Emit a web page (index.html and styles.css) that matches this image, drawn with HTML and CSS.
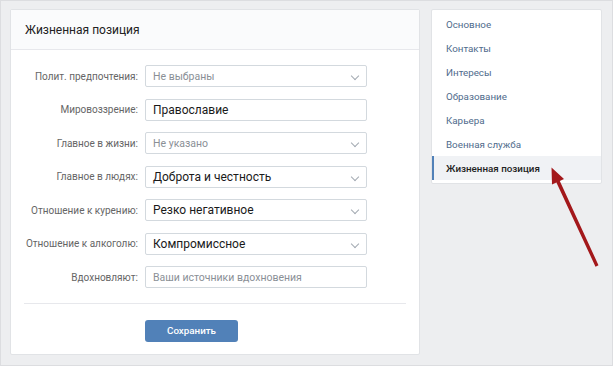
FILE: index.html
```html
<!DOCTYPE html>
<html lang="ru">
<head>
<meta charset="utf-8">
<link rel="stylesheet" href="styles.css">
</head>
<body>
<div class="page">
  <div class="card main">
    <div class="card-head">Жизненная позиция</div>
    <div class="form">
      <div class="row"><div class="label">Полит. предпочтения:</div><div class="field select placeholder">Не выбраны<span class="chev"></span></div></div>
      <div class="row"><div class="label">Мировоззрение:</div><div class="field">Православие</div></div>
      <div class="row"><div class="label">Главное в жизни:</div><div class="field select placeholder">Не указано<span class="chev"></span></div></div>
      <div class="row"><div class="label">Главное в людях:</div><div class="field select">Доброта и честность<span class="chev"></span></div></div>
      <div class="row"><div class="label">Отношение к курению:</div><div class="field select">Резко негативное<span class="chev"></span></div></div>
      <div class="row"><div class="label">Отношение к алкоголю:</div><div class="field select">Компромиссное<span class="chev"></span></div></div>
      <div class="row"><div class="label">Вдохновляют:</div><div class="field placeholder">Ваши источники вдохновения</div></div>
    </div>
    <div class="divider"></div>
    <div class="actions"><button class="btn">Сохранить</button></div>
  </div>
  <div class="card side">
    <div class="menu-item">Основное</div>
    <div class="menu-item">Контакты</div>
    <div class="menu-item">Интересы</div>
    <div class="menu-item">Образование</div>
    <div class="menu-item">Карьера</div>
    <div class="menu-item">Военная служба</div>
    <div class="menu-item active">Жизненная позиция</div>
  </div>
  <svg class="arrow" width="613" height="366" viewBox="0 0 613 366">
    <polygon points="551.5,167.5 564,179 559.8,180.9 598.5,265.3 595.5,266.7 556.4,182.4 552,184.5" fill="#a3181b"/>
  </svg>
</div>
</body>
</html>
```
FILE: styles.css
```css
* { box-sizing: border-box; }
html, body { margin: 0; padding: 0; }
body {
  background: #edeef0;
  font-family: Roboto, "Open Sans", "Liberation Sans", sans-serif;
  width: 613px;
  height: 366px;
  overflow: hidden;
}
.page {
  position: relative;
  width: 613px;
  height: 366px;
  border: 1px solid #dcdde0;
  padding: 8px 9px;
  display: flex;
  gap: 11px;
  align-items: flex-start;
}
.card {
  background: #fff;
  border: 1px solid #e1e3e6;
  border-radius: 2px;
}
.main {
  width: 410px;
  height: 346px;
}
.card-head {
  height: 40px;
  background: #fafbfc;
  border-bottom: 1px solid #e7e8ec;
  padding-left: 14px;
  display: flex;
  align-items: center;
  font-size: 12px;
  color: #222;
}
.form {
  padding-top: 15px;
  display: flex;
  flex-direction: column;
  gap: 11.5px;
}
.row {
  display: grid;
  grid-template-columns: 127px 222px;
  column-gap: 7px;
  align-items: center;
}
.label {
  text-align: right;
  font-size: 10px;
  color: #656565;
  white-space: nowrap;
}
.field {
  position: relative;
  height: 22px;
  border: 1px solid #d3d9de;
  border-radius: 2px;
  padding-left: 7px;
  display: flex;
  align-items: center;
  font-size: 12px;
  color: #1a1a1a;
}
.field.placeholder { color: #8a8f96; font-size: 10.5px; }
.chev {
  position: absolute;
  right: 8px;
  top: 7px;
  width: 6px;
  height: 6px;
  border-right: 1px solid #a3aab2;
  border-bottom: 1px solid #a3aab2;
  transform: rotate(45deg);
}
.divider {
  height: 1px;
  background: #e7e8ec;
  margin: 15px 13px 0;
}
.actions {
  padding: 15px 0 0 134px;
}
.btn {
  width: 93px;
  height: 22px;
  background: #5181b8;
  border: 0;
  border-radius: 3px;
  color: #fff;
  font-family: Roboto, "Open Sans", "Liberation Sans", sans-serif;
  font-size: 9.8px;
  font-weight: 500;
  padding: 0;
}
.side {
  width: 171px;
  padding: 2px 0 3px;
}
.menu-item {
  height: 24px;
  display: flex;
  align-items: center;
  padding-left: 12px;
  font-size: 9.8px;
  color: #4f6b8c;
  border-left: 2px solid transparent;
}
.menu-item.active {
  background: #f0f2f5;
  border-left-color: #5181b8;
  color: #222;
  font-weight: 500;
}
.arrow {
  position: absolute;
  left: -1px;
  top: -1px;
  pointer-events: none;
}
```
